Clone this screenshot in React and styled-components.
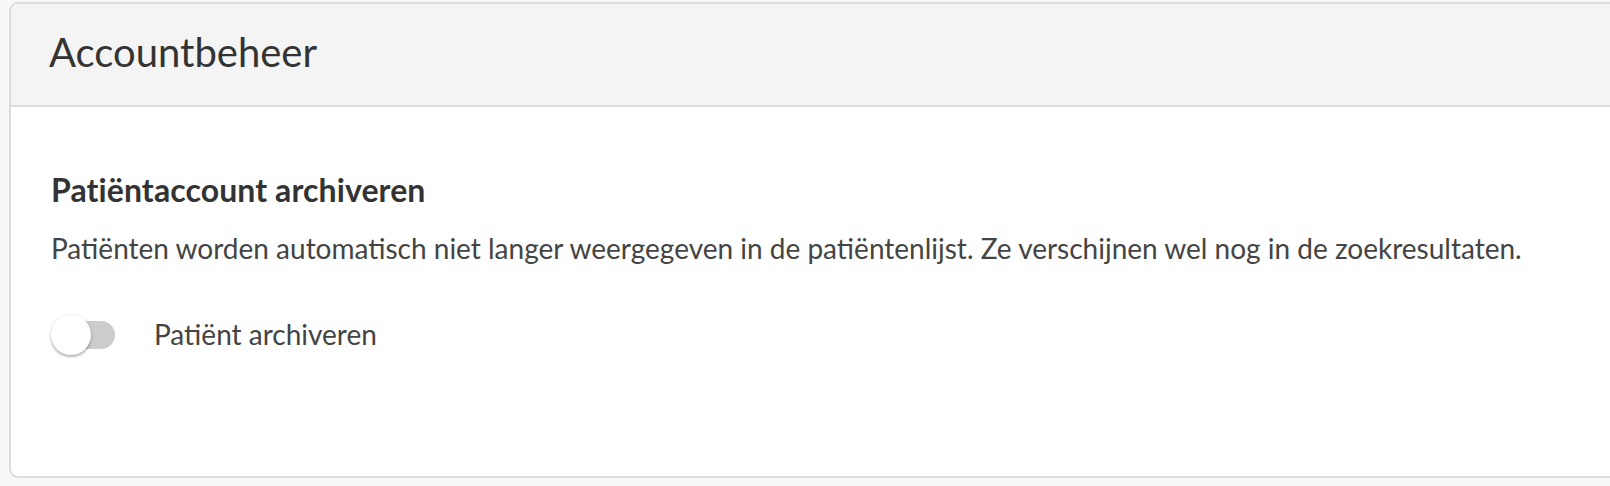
import React, { useState } from "react";
import styled, { createGlobalStyle } from "styled-components";

const GlobalStyle = createGlobalStyle`
  html, body {
    margin: 0;
    padding: 0;
    background: #f8f8f8;
    font-family: Lato, "Noto Sans", sans-serif;
    overflow: hidden;
  }
`;

const Page = styled.div`
  padding: 2px 0 0 9px;
  min-height: 486px;
  box-sizing: border-box;
`;

const Card = styled.section`
  width: calc(100% + 20px);
  background: #fff;
  border: 2px solid #dcdcdc;
  border-radius: 9px;
  overflow: hidden;
`;

const CardHeader = styled.header`
  background: #f4f4f4;
  border-bottom: 2px solid #dcdcdc;
  padding: 24px 38px 29px;
`;

const CardTitle = styled.h1`
  margin: 0;
  font-size: 40px;
  font-weight: 400;
  line-height: 1.2;
  color: #333;
`;

const CardBody = styled.div`
  padding: 64px 40px 121px;
`;

const SectionTitle = styled.h2`
  margin: 0;
  font-size: 32px;
  font-weight: 700;
  line-height: 1.2;
  color: #333;
  letter-spacing: 0.1px;
`;

const Description = styled.p`
  margin: 23px 0 0;
  font-size: 28px;
  line-height: 1.2;
  color: #444;
`;

const SwitchRow = styled.label`
  display: flex;
  align-items: center;
  gap: 39px;
  margin-top: 49px;
  height: 40px;
  cursor: pointer;
`;

const Switch = styled.span`
  position: relative;
  display: inline-block;
  width: 64px;
  height: 40px;
`;

const Track = styled.span`
  position: absolute;
  left: 4px;
  top: 6px;
  width: 60px;
  height: 28px;
  border-radius: 14px;
  background: ${(p) => (p.$on ? "#8fd0c8" : "#cccccc")};
`;

const Knob = styled.span`
  position: absolute;
  top: 0;
  left: ${(p) => (p.$on ? "24px" : "0")};
  width: 40px;
  height: 40px;
  border-radius: 50%;
  background: ${(p) => (p.$on ? "#1a9e8f" : "#fff")};
  box-shadow: 0 2px 2px rgba(0, 0, 0, 0.22), 0 1px 4px rgba(0, 0, 0, 0.14);
  transition: left 0.15s;
`;

const HiddenInput = styled.input`
  display: none;
`;

const SwitchLabel = styled.span`
  font-size: 28px;
  line-height: 1.2;
  color: #444;
`;

export default function App() {
  const [archived, setArchived] = useState(false);

  return (
    <Page>
      <GlobalStyle />
      <Card>
        <CardHeader>
          <CardTitle>Accountbeheer</CardTitle>
        </CardHeader>
        <CardBody>
          <SectionTitle>Patiëntaccount archiveren</SectionTitle>
          <Description>
            Patiënten worden automatisch niet langer weergegeven in de
            patiëntenlijst. Ze verschijnen wel nog in de zoekresultaten.
          </Description>
          <SwitchRow>
            <HiddenInput
              type="checkbox"
              checked={archived}
              onChange={(e) => setArchived(e.target.checked)}
            />
            <Switch>
              <Track $on={archived} />
              <Knob $on={archived} />
            </Switch>
            <SwitchLabel>Patiënt archiveren</SwitchLabel>
          </SwitchRow>
        </CardBody>
      </Card>
    </Page>
  );
}
